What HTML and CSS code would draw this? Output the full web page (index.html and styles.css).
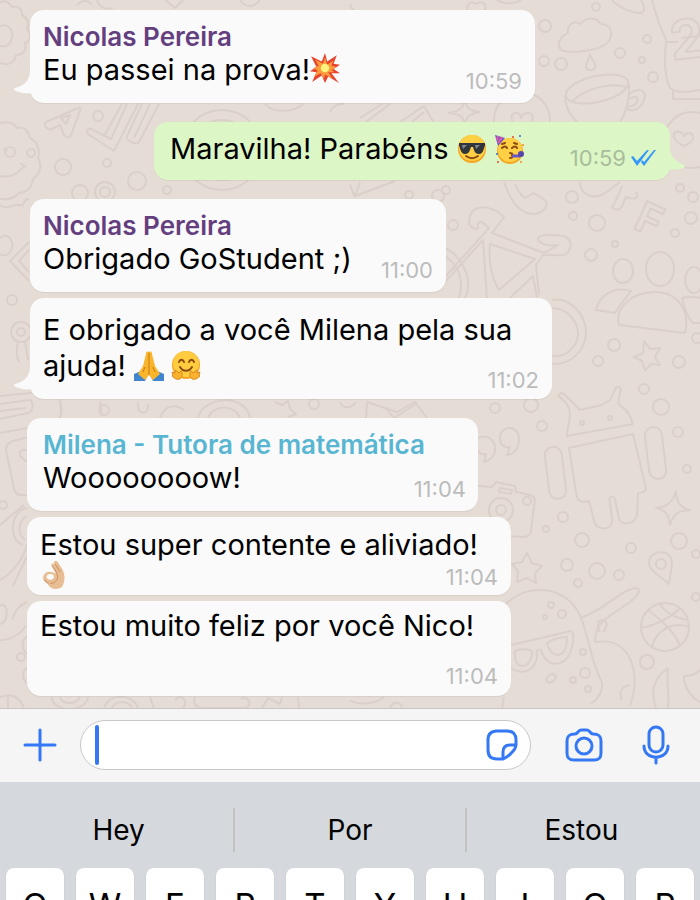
FILE: index.html
```html
<!DOCTYPE html>
<html lang="pt">
<head>
  <meta charset="utf-8">
  <meta name="viewport" content="width=device-width, initial-scale=1">
  <title>Chat</title>
  <link rel="stylesheet" href="styles.css">
</head>
<body>
  <main class="chat">
    <svg class="wallpaper" viewBox="0 0 700 708" preserveAspectRatio="xMidYMin slice" aria-hidden="true">
      <!-- top left -->
      <path d="M0 3c5-4 10 0 12 4 6-2 11 3 10 8 6 3 8 8 5 14 5 4 3 12-2 14 2 7-2 12-9 12-1 8-8 11-16 8M0 26c8-3 14 4 12 12-2 8-8 9-12 8"/>
      <path d="M77 5c4-5 10-5 15-1M97 0c2 7 8 10 16 8M165 0l10 8 8-8M240 0c5 8 14 8 20 0"/>
      <!-- letter, pencils, cookie -->
      <path d="M78 108l-32 14c-3 3 2 9 6 7l8-4 3 8c2 5 6 6 8 2l9-24c1-3 0-4-2-3zM61 118l9-3-4 9zM88 134c-3-4 2-7 5-4l18 9 16-35M122 104l-18 32M88 134l26 17 24-47M142 104l-15 32c-2 4 10 10 12 6l20-38M150 104l-16 34"/>
      <path d="M0 123c8-2 14 0 17 5 7-2 12 4 13 10 8 4 10 12 8 20 5 8 1 17-5 21-1 10-8 14-14 14-5 6-11 7-19 6"/>
      <path d="M0 176c10 2 18-2 24-10M20 163l6 4M4 148l3 3"/>
      <circle cx="10" cy="152" r="5"/><circle cx="31" cy="153" r="4"/>
      <circle cx="98" cy="116" r="5"/><circle cx="107" cy="163" r="4"/><circle cx="63" cy="167" r="8"/><circle cx="137" cy="181" r="9"/>
      <circle cx="167" cy="190" r="4"/><circle cx="80" cy="193" r="8"/><circle cx="105" cy="192" r="10"/><circle cx="105" cy="192" r="5"/>
      <circle cx="222" cy="150" r="40"/><circle cx="222" cy="150" r="30"/><circle cx="222" cy="150" r="22"/>
      <path d="M265 104c8 10 30 8 38 0M330 112c2-6 8-8 14-8M360 118l22-14M366 122l24-18M400 122l24-16 10 17M412 122l12-10"/>
      <!-- top right: cloud, rain, mug -->
      <path d="M350 4c2 10 20 16 32 8M468 12c-3-8 4-12 8-8 6-4 12 0 8 7M497 0c6 4 16 5 24 0"/>
      <path d="M612 0c4 6 22 14 29 13 5-2 3-9 0-13"/>
      <path d="M561 50c-6-8 2-15 7-17-1-7 5-14 12-9 8-9 18-5 21 0 10 0 13 10 7 18-7 9-38 12-47 8z"/>
      <path d="M590 55c-2 6-6 10-3 14 4 3 10 0 8-5z"/>
      <circle cx="545" cy="26" r="6"/><circle cx="596" cy="7" r="4"/><circle cx="544" cy="61" r="5"/><circle cx="561" cy="64" r="6"/>
      <circle cx="620" cy="53" r="5"/><circle cx="647" cy="39" r="4"/><circle cx="642" cy="60" r="3"/><circle cx="653" cy="77" r="5"/>
      <ellipse cx="597" cy="89" rx="32" ry="13" transform="rotate(-13 597 89)"/>
      <path d="M572 102c12-14 40-20 54-15M565 96c1 14 6 20 12 26M629 84c1 18-3 29-9 38M629 94c12-8 18-3 15 6-3 9-11 12-18 9M630 99c6-4 9-2 7 3-2 3-5 5-9 4"/>
      <path d="M652 0c4 16 9 29 15 42M666 42c-2 18-2 34 4 46 8 6 20 4 30 2M673 91v8h27M666 42h12M700 36l-18 2"/>
      <text x="672" y="60" font-size="54" transform="rotate(-6 672 60)">2</text>
      <path d="M465 99c1 9 4 12 15 13-11 2-14 4-15 13-2-9-5-11-16-12 11-2 14-5 16-14z"/>
      <circle cx="522" cy="120" r="28"/>
      <path d="M521 130c-8-6-12-12-8-16 4-3 8 0 8 4 2-5 8-7 11-3 3 5-3 10-11 15z"/>
      <circle cx="692" cy="140" r="28"/>
      <path d="M684 146c-12-6-12-12-8-14 5-2 7 2 8 4 3-4 8-4 9 0 1 5-4 8-9 10z"/>
      <!-- between the first groups -->
      <path d="M350 185l5 12M360 182l-5 14 40-15M504 182c6 16 12 30 28 32 12 0 16-8 14-13l-12-8-9 5c-4-3-8-8-10-14M580 182c0 12 12 18 24 12l16-12M612 208c4-8 8-16 10-22M612 208c6 3 9 2 11-4l3-7c8 3 14 2 10-5"/>
      <circle cx="446" cy="190" r="4"/><circle cx="409" cy="195" r="4"/><circle cx="438" cy="196" r="6"/><circle cx="572" cy="197" r="6"/>
      <circle cx="573" cy="216" r="4"/><circle cx="597" cy="223" r="8"/><circle cx="680" cy="188" r="4"/><circle cx="693" cy="197" r="5"/>
      <circle cx="691" cy="218" r="6"/><circle cx="675" cy="233" r="4"/><circle cx="615" cy="244" r="3"/><circle cx="591" cy="255" r="6"/><circle cx="453" cy="225" r="5"/>
      <text x="632" y="228" font-size="42" transform="rotate(24 632 228)">F</text>
      <!-- bicycle -->
      <path d="M445 277l44-49c-10-9-12-7-11-1 1 4-9 2-9-6 2-20 25-15 35-4l-12 16 52 20 14-8c-10 2-21-2-20-7 3-4 18-3 26-2 10 4 7 14 2 18-5 3-16 0-23 1l-7 10 3 30M445 282l38-42 4 60M490 244c-2 16 2 36 9 46l36-31zM510 298l23-22 4 22"/>
      <path d="M445 248c14 6 30 30 20 50M445 256c12 8 20 22 14 42M552 300c18-4 34 16 34 32 0 18-15 33-34 32M552 308c14 0 26 12 26 26 0 12-12 24-26 22"/>
      <!-- people -->
      <ellipse cx="623" cy="271" rx="10" ry="12"/><ellipse cx="660" cy="269" rx="14" ry="17"/><ellipse cx="694" cy="280" rx="9" ry="13"/>
      <path d="M619 325c-4-15 10-33 36-33 24 0 35 20 30 41zM631 291c-20-6-33 8-35 19l19 3 7-10zM682 298c8-2 14-1 18 0M682 298c3 10 4 18 11 25h7"/>
      <path d="M644 341l6 8 10-1-5 9 5 8-9-1-6 7-3-10-8-4 9-4z"/>
      <circle cx="614" cy="345" r="6"/><circle cx="598" cy="361" r="5"/><circle cx="679" cy="362" r="6"/><circle cx="697" cy="338" r="5"/>
      <circle cx="644" cy="389" r="5"/>
      <!-- left edge -->
      <path d="M0 205c8 6 14-2 20 0s2-7 9-6M0 238c10-8 16 8 10 14-3 4-7 4-10 2M29 242l-19 19 19 20M29 250l-10 11 10 11"/>
      <circle cx="12" cy="300" r="5"/><circle cx="21" cy="332" r="10"/><circle cx="21" cy="332" r="4"/>
      <path d="M18 342c-2 10-2 14 1 20M25 342l3 18M0 396l60-6M0 404l30-4c4 2 3 12-2 13L0 419M0 411l26-3M0 433l56-10c5-1 6-8 4-22M28 437l-15 4c-7 2-8 8-6 14l7 34c1 6 6 7 13 6M20 456c-2-5 3-7 7-6M20 456l7 6"/>
      <circle cx="3" cy="505" r="4"/><path d="M27 508c-16 2-20 32-4 37M27 516c-9 4-10 18-2 24M0 525l24-20M0 580c12-6 24-22 27-36M0 606c8-6 10 16 0 18M12 620c4-10 6-14 15-18M27 556l-14 30"/>
      <circle cx="21" cy="657" r="4"/><path d="M27 636c-6 6-6 12 0 18M27 668c-6 4-5 12 1 16M0 640c12 0 20-6 26-14"/>
      <!-- between the lower groups -->
      <path d="M60 400c2 8 2 13 0 18M100 402l2 14M138 402c-2 14 12 14 10 2M160 418c4-12 14-15 24-8M198 418c5-22 48-25 52 0M208 418c5-14 27-14 32 0M275 402l7 3 6-4 2 8 6 5-8 3M340 402c3 8 12 6 16 0M366 418l1-16 30 10 18-10 12 16M386 408l8 10 22-14"/>
      <circle cx="104" cy="410" r="5"/><circle cx="314" cy="404" r="5"/><circle cx="495" cy="408" r="5"/><circle cx="531" cy="405" r="7"/><circle cx="542" cy="426" r="5"/>
      <!-- quotes, camera, android -->
      <path d="M478 438c16-8 26 18 6 24l2-8c-5 1-8-1-8-4M500 440c-2-16 20-16 19 0 0 9-6 15-12 15l3-8c-6 1-9-2-10-7z"/>
      <path d="M478 486l14 1 4-5 19 4 1 6 14 3c6 2 5 6 4 11l-3 25c-1 5-4 6-8 6l-17-1M500 488l12 2-1 4-12-2z"/><circle cx="501" cy="510" r="12"/><circle cx="501" cy="510" r="5"/><circle cx="527" cy="501" r="4"/>
      <path d="M567 436c1-15 6-23 0-32l-7-7c-4 1 0-6 4-3l16 16 22-5 8-5c4-6 4-14 9-13 5 2-3 12 0 18 8 4 12 12 14 19z"/>
      <circle cx="582" cy="423" r="2"/><circle cx="610" cy="418" r="2"/>
      <path d="M569 448l64-14 13 54c0 5-6 4-8 6l-1 20c0 9-14 13-18 5l-4-20c-2-5-7-1-5 3l2 18c1 11-14 10-17 4l-6-23c-10 3-12-2-13-9z"/>
      <rect x="547" y="447" width="17" height="52" rx="8" transform="rotate(-7 555 473)"/><rect x="647" y="427" width="17" height="52" rx="8" transform="rotate(-7 656 453)"/>
      <path d="M676 491c0 11 4 17 14 19-11 0-17 4-20 15-1-10-4-15-14-17 10-1 17-5 20-17z"/>
      <circle cx="661" cy="407" r="8"/><circle cx="678" cy="432" r="5"/><circle cx="687" cy="469" r="4"/><circle cx="563" cy="517" r="5"/><circle cx="546" cy="529" r="3"/>
      <circle cx="582" cy="540" r="7"/><circle cx="631" cy="548" r="5"/><circle cx="679" cy="541" r="8"/><circle cx="567" cy="565" r="6"/><circle cx="597" cy="571" r="8"/>
      <circle cx="619" cy="575" r="5"/><circle cx="578" cy="583" r="4"/><circle cx="696" cy="554" r="4"/><circle cx="696" cy="597" r="4"/>
      <path d="M527 553l5 10 10 3-7 7 1 10-9-5-10 4 1-11-6-7 10-2zM669 584c-8-8-20-12-20-22 1-13 24-14 23 2z"/><circle cx="661" cy="564" r="5"/>
      <!-- ghost with glasses, ball -->
      <path d="M506 604c24-24 64-16 75 14 10 26 10 44 20 62 4 10-4 20-10 24M511 645l60-14c5 3 1 24-6 29-10 7-20 4-24-10-6-1-4 3-4 8-4 16-17 16-26 10M515 651c6-3 14-2 17 0 0 8-2 14-9 15-6 0-9-5-8-15zM547 643c6-4 14-6 20-6 0 8-2 17-9 18-6 0-9-4-11-12zM581 618c30-12 36-26 54-30 8 0 2 10-8 16-20 14-32 18-32 38M595 642c38-6 46 34 35 64M546 680c2-6 8-8 10-3-1 5-7 8-10 3zM600 632c-4-8-2-12 3-12 5 2 5 6 0 12M622 700c-4-8 0-14 8-15"/>
      <circle cx="545" cy="617" r="2"/><circle cx="551" cy="605" r="3"/><circle cx="562" cy="614" r="4"/><circle cx="583" cy="652" r="3"/><circle cx="585" cy="673" r="5"/><circle cx="573" cy="680" r="3"/><circle cx="588" cy="689" r="3"/>
      <circle cx="665" cy="627" r="24"/><path d="M641 628c16-3 32-12 39-20M648 610c14 10 28 24 32 36M652 647c4-18 22-26 37-20M660 604c6 10 16 14 28 16"/>
      <circle cx="647" cy="662" r="7"/><path d="M668 668c-14 10-18 24-12 40M668 668c-2 16 2 26 0 40M684 676c6 0 12-2 16-6M684 676c0 12 8 22 16 26"/>
      <!-- strip over the composer -->
      <path d="M0 697c12-4 20 0 24 11M8 708V697M52 697c0 16 34 16 36 0M60 697c2 8 16 8 20 0M104 708c5-16 30-14 34 0M112 708c4-8 16-8 20 0M150 697l4 11M175 700c6-6 14 0 8 8M195 697c-3 7 2 11 8 11h44c6-6 0-12-6-9M262 708l6-10 12 6 2-7M298 697l1 11M350 700c8 6 26 4 34-3M390 708c3-8 12-6 12 0M504 697l-2 11"/>
    </svg>

    <section class="group">
      <article class="bubble bubble-1">
        <h2 class="name nicolas">Nicolas Pereira</h2>
        <div class="last">
          <p>Eu passei na prova!<svg class="emoji" viewBox="1 1 28 28" role="img" aria-label="💥">
            <path fill="#e8432f" d="M2 4l10 5 3-8 2 8 9-6-3 8 6 1-6 4 6 4-8 0 7 9-10-6-3 6-3-7-9 6 4-9-6-1 6-4z"/>
            <path fill="#fb9b3c" d="M6 7l7 4 2-6 2 7 6-4-2 5 5 1-5 3 3 2-6 0 4 6-7-4-1 4-3-5-6 3 3-6-4-2 5-2z"/>
            <circle cx="15" cy="15" r="4" fill="#fff27c"/>
          </svg></p>
          <time>10:59</time>
        </div>
        <svg class="tail" viewBox="0 0 18 24"><path fill="#fafafa" d="M16 0c0 9-6 15-15 17-2 1-1 2 1 3 5 2 10 3 16 2V0z"/></svg>
      </article>
    </section>

    <section class="group sent">
      <article class="bubble bubble-2">
        <div class="last">
          <p>Maravilha! Parabéns <svg class="emoji" viewBox="0 0 30 30" role="img" aria-label="😎">
            <circle cx="15" cy="15" r="14" fill="#f5a623"/><circle cx="15" cy="14" r="13" fill="#ffd044"/>
            <path fill="#30343b" d="M2 9h26v3c-1 0-1 8-6 8-5 0-5-5-6-7h-2c-1 2-1 7-6 7-5 0-5-8-6-8z"/>
            <path fill="#7d8590" d="M5 11l5 0-4 4zM18 11l5 0-4 4z"/>
            <path fill="none" stroke="#8a4b12" stroke-width="2" stroke-linecap="round" d="M9 22c4 3 8 3 12 0"/>
          </svg><svg class="emoji" viewBox="0 0 30 30" role="img" aria-label="🥳">
            <circle cx="16" cy="17" r="13" fill="#f5a623"/><circle cx="16" cy="16" r="12" fill="#ffd044"/>
            <path fill="#6b57c8" d="M1 1l10 3-7 8z"/><path stroke="#e65aa8" stroke-width="2" d="M4 2l-1 4M8 3L4 9"/>
            <path fill="none" stroke="#8a4b12" stroke-width="2" stroke-linecap="round" d="M8 14c2-2 4-2 5 0M18 14c2-2 4-2 5 0M8 10l3-1M20 9l3 1M16 19c3 0 3 2 1 2 3 0 2 3-1 3"/>
            <path stroke="#6b57c8" stroke-width="3" d="M18 22h8"/><circle cx="27" cy="20" r="3" fill="#5547a8"/>
            <circle cx="19" cy="3" r="1" fill="#e8432f"/><circle cx="26" cy="2" r="1" fill="#2f6fd6"/><circle cx="3" cy="20" r="1" fill="#2f6fd6"/><circle cx="4" cy="28" r="1" fill="#e8432f"/><circle cx="27" cy="28" r="1" fill="#f08a24"/><circle cx="29" cy="11" r="1" fill="#f08a24"/>
          </svg></p>
          <div class="status">
            <time>10:59</time>
            <svg class="checks" viewBox="0 0 26 16" role="img" aria-label="Lida"><path fill="#3497f9" d="M1 7l2-1 4 5L17 0h2L7 16zM11 12l1-2 2 2L24 0h2L14 16z"/></svg>
          </div>
        </div>
        <svg class="tail" viewBox="0 0 18 24"><path fill="#dcf6c5" d="M2 0c0 9 7 14 14 17 2 1 1 2-1 3-5 2-9 2-15 1V0z"/></svg>
      </article>
    </section>

    <section class="group">
      <article class="bubble bubble-3">
        <h2 class="name nicolas">Nicolas Pereira</h2>
        <div class="last">
          <p>Obrigado GoStudent ;)</p>
          <time>11:00</time>
        </div>
      </article>
      <article class="bubble bubble-4">
        <p>E obrigado a você Milena pela sua</p>
        <div class="last">
          <p>ajuda! <svg class="emoji" viewBox="0 0 30 30" role="img" aria-label="🙏">
            <path fill="#3f86cf" d="M0 23l7-3 6 6-2 4H0zM30 23l-7-3-6 6 2 4h11z"/>
            <path fill="#f9b52b" d="M15 1c-2-1-3 0-3 2L9 15l-5 8 7 6 4-5zM15 1c2-1 3 0 3 2l3 12 5 8-7 6-4-5z"/>
            <path stroke="#c77a14" d="M15 2v22M11 16l-2 5M19 16l2 5"/>
          </svg><svg class="emoji" viewBox="0 0 30 30" role="img" aria-label="🤗">
            <circle cx="15" cy="14" r="14" fill="#f5a623"/><circle cx="15" cy="13" r="13" fill="#ffcb3f"/>
            <path fill="none" stroke="#8a4b12" stroke-width="2" stroke-linecap="round" d="M8 11c1-3 4-3 5 0M18 11c1-3 4-3 5 0M9 16c3 5 9 5 12 0"/>
            <path fill="#fbb130" stroke="#d98a1a" d="M9 28c-4 1-6-1-8-3l1-1-1-3 3 1 0-3 4 3 2-2c2 3 1 6-1 8zM21 28c4 1 6-1 8-3l-1-1 1-3-3 1 0-3-4 3-2-2c-2 3-1 6 1 8z"/>
          </svg></p>
          <time>11:02</time>
        </div>
        <svg class="tail" viewBox="0 0 18 24"><path fill="#fafafa" d="M16 0c0 9-6 15-15 17-2 1-1 2 1 3 5 2 10 3 16 2V0z"/></svg>
      </article>
    </section>

    <section class="group tutor">
      <article class="bubble bubble-5">
        <h2 class="name milena">Milena - Tutora de matemática</h2>
        <div class="last">
          <p>Woooooooow!</p>
          <time>11:04</time>
        </div>
      </article>
      <article class="bubble bubble-6">
        <p>Estou super contente e aliviado!</p>
        <div class="last">
          <svg class="emoji" viewBox="0 0 30 30" role="img" aria-label="👌🏼">
            <path fill="#e9bd93" d="M4 15c2-4 8-5 13-1L13 6c-2-3 0-4 2-3l2 2-2-3c0-2 2-3 4-1l3 5c3 4 5 9 4 15-1 7-4 9-9 9-4 0-7-2-9-6-4-2-6-5-4-9z"/>
            <ellipse cx="11" cy="17" rx="4" ry="3" fill="#fafafa"/>
            <path fill="none" stroke="#c48c5f" d="M17 14l2 2c0 5-3 8-8 8M13 5l6 9M16 3l6 9M5 20c1 2 2 3 4 4"/>
          </svg>
          <time>11:04</time>
        </div>
      </article>
      <article class="bubble bubble-7">
        <p>Estou muito feliz por você Nico!</p>
        <div class="last">
          <time>11:04</time>
        </div>
      </article>
    </section>
  </main>

  <form class="composer">
    <button type="button" class="icon-btn add" aria-label="Anexar">
      <svg width="34" height="34" viewBox="0 0 34 34"><path d="M17 2v30M2 17h30"/></svg>
    </button>
    <div class="field">
      <span class="caret"></span>
      <input type="text" aria-label="Mensagem">
      <button type="button" class="icon-btn" aria-label="Figurinhas">
        <svg width="32" height="32" viewBox="0 0 32 32"><path d="M30 16V11C30 5 27 2 21 2H11C5 2 2 5 2 11v10c0 6 3 9 9 9h5c4 0 14-9 14-14zM30 16h-6c-5 0-7 3-7 7v7"/></svg>
      </button>
    </div>
    <button type="button" class="icon-btn" aria-label="Câmera">
      <svg width="38" height="34" viewBox="0 0 38 34"><path d="M10 6c3 0 3-4 6-4h6c3 0 3 4 6 4 6 0 8 2 8 7v12c0 5-2 7-7 7H9c-5 0-7-2-7-7V13c0-5 2-7 8-7z"/><circle cx="19" cy="18" r="8"/></svg>
    </button>
    <button type="button" class="icon-btn" aria-label="Gravar áudio">
      <svg width="38" height="40" viewBox="0 0 38 40"><rect x="12" y="2" width="14" height="25" rx="7"/><path d="M7 21c0 15 24 15 24 0M19 33v5"/></svg>
    </button>
  </form>

  <div class="keyboard">
    <div class="suggestions">
      <button type="button">Hey</button>
      <button type="button">Por</button>
      <button type="button">Estou</button>
    </div>
    <div class="keys">
      <button type="button">Q</button>
      <button type="button">W</button>
      <button type="button">E</button>
      <button type="button">R</button>
      <button type="button">T</button>
      <button type="button">Y</button>
      <button type="button">U</button>
      <button type="button">I</button>
      <button type="button">O</button>
      <button type="button">P</button>
    </div>
  </div>
</body>
</html>
```
FILE: styles.css
```css
* {
  box-sizing: border-box;
}

body {
  margin: 0;
  height: 100vh;
  overflow: hidden;
  font-family: Inter, "Liberation Sans", sans-serif;
  color: #000;
}

h2, p {
  margin: 0;
  font-size: 29px;
  line-height: 34px;
  font-weight: 400;
  white-space: nowrap;
}

button {
  padding: 0;
  border: none;
  background: none;
  font-family: inherit;
  color: inherit;
  cursor: pointer;
}

.chat {
  position: relative;
  display: flex;
  flex-direction: column;
  gap: 19px;
  padding: 10px 30px 12px;
  background-color: #e5dcd6;
}

.wallpaper {
  position: absolute;
  top: 0;
  left: 0;
  width: 100%;
  height: 100%;
  fill: none;
  stroke: #dad0c9;
  stroke-width: 2;
  stroke-linejoin: round;
}

.wallpaper text {
  font-weight: 700;
}

.group {
  position: relative;
  display: flex;
  flex-direction: column;
  align-items: flex-start;
  gap: 6px;
}

.sent {
  align-items: flex-end;
}

.tutor {
  margin-left: -3px;
}

.bubble {
  position: relative;
  max-width: 100%;
  padding: 10px 13px;
  border-radius: 14px;
  background-color: #fafafa;
  box-shadow: 0 1px 1px rgba(0, 0, 0, 0.06);
}

.sent .bubble {
  padding: 10px 14px 10px 16px;
  background-color: #dcf6c5;
}

.name {
  font-size: 26px;
  line-height: 33px;
  font-weight: 600;
}

.nicolas {
  color: #643f80;
}

.milena {
  color: #58b6d2;
}

.last {
  display: flex;
  justify-content: space-between;
  align-items: flex-end;
}

.last p {
  margin-bottom: 6px;
}

.sent .last p {
  margin-bottom: 4px;
}

time {
  margin-left: auto;
  font-size: 22px;
  line-height: 24px;
  color: #bcbcbc;
}

.sent time {
  color: #a9bd9d;
}

.status {
  display: flex;
  align-items: center;
  gap: 4px;
}

.checks {
  width: 26px;
  height: 16px;
}

.emoji {
  width: 30px;
  height: 30px;
  vertical-align: -5px;
}

.emoji + .emoji {
  margin-left: 7px;
}

.tail {
  position: absolute;
  left: -16px;
  bottom: 8px;
  width: 18px;
  height: 24px;
}

.sent .tail {
  left: auto;
  right: -16px;
}

.bubble-1 {
  width: 505px;
}

.bubble-1 .emoji {
  vertical-align: -3px;
}

.bubble-2 {
  width: 516px;
}

.bubble-3 {
  width: 416px;
}

.bubble-4 {
  width: 522px;
  padding: 14px 13px 7px;
}

.bubble-4 p {
  line-height: 36px;
}

.bubble-4 .last p {
  margin-bottom: 8px;
}

.bubble-5 {
  width: 451px;
  padding: 10px 12px 10px 16px;
}

.bubble-6 {
  width: 484px;
  padding: 12px 13px 6px;
}

.bubble-6 p, .bubble-7 p {
  line-height: 32px;
}

.bubble-6 .emoji {
  width: 28px;
  height: 28px;
}

.bubble-7 {
  width: 484px;
  padding: 9px 13px 8px;
}

.bubble-7 .last {
  height: 46px;
}

.composer {
  position: relative;
  display: flex;
  align-items: center;
  padding: 11px 25px 12px 0;
  border-top: 1px solid #c9c5c3;
  background-color: #f5f5f5;
}

.icon-btn {
  flex: none;
  display: flex;
  justify-content: center;
  margin-left: 34px;
}

.icon-btn svg {
  fill: none;
  stroke: #3478f6;
  stroke-width: 3;
  stroke-linecap: round;
  stroke-linejoin: round;
}

.composer .add {
  width: 80px;
  margin: 0;
}

.field {
  flex: 1;
  min-width: 0;
  display: flex;
  align-items: center;
  height: 50px;
  padding: 0 12px 0 14px;
  border: 1px solid #c8c8c8;
  border-radius: 25px;
  background-color: #fff;
}

.field input {
  flex: 1;
  min-width: 0;
  border: none;
  outline: none;
  background: none;
  font: inherit;
  font-size: 28px;
}

.field .icon-btn {
  margin: 0;
}

.caret {
  width: 4px;
  height: 40px;
  border-radius: 2px;
  background-color: #3478f6;
}

.keyboard {
  position: relative;
  background-color: #d5d8dd;
}

.suggestions {
  display: flex;
  padding: 26px 4px 16px;
}

.suggestions button {
  flex: 1;
  height: 44px;
  font-size: 28px;
}

.suggestions button + button {
  border-left: 2px solid #c2c2c2;
}

.keys {
  display: flex;
  gap: 12px;
  padding: 0 6px;
}

.keys button {
  flex: 1;
  height: 74px;
  border-radius: 8px;
  background-color: #fff;
  box-shadow: 0 1px 1px rgba(0, 0, 0, 0.3);
  font-size: 33px;
}
```
